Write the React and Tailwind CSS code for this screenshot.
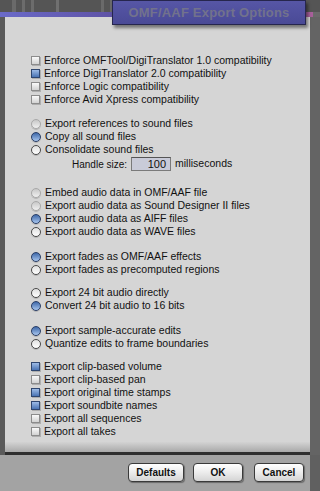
import React from "react";

const font = { fontFamily: '"Liberation Sans", Arial, sans-serif' };

function Check({ on }) {
  return (
    <span
      className={
        "inline-block w-[9px] h-[9px] shrink-0 border shadow-[1px_1px_0_rgba(0,0,0,0.18)] " +
        (on
          ? "border-[#2f4770] bg-gradient-to-b from-[#9dbbe6] to-[#4a74b4]"
          : "border-[#8c8c8c] bg-gradient-to-b from-[#fafafa] to-[#d2d2d2]")
      }
    />
  );
}

function Radio({ on, dis }) {
  let cls = "border-[#4a4a4a] bg-gradient-to-b from-[#e0e0e0] to-[#ffffff]";
  if (on) cls = "border-[#2a3e66] bg-gradient-to-b from-[#3f68a8] to-[#a8c6ee]";
  if (dis) cls = "border-[#a8a8a8] bg-gradient-to-b from-[#c8c8c8] to-[#f0f0f0]";
  return (
    <span
      className={
        "inline-block w-[10px] h-[10px] shrink-0 rounded-full border shadow-[0_1px_0_rgba(0,0,0,0.15)] " +
        cls
      }
    />
  );
}

function Row({ kind, on, dis, children }) {
  return (
    <div className="h-[13px] flex items-center gap-[4px]">
      {kind === "c" ? <Check on={on} /> : <Radio on={on} dis={dis} />}
      <span className="text-[10.5px] leading-none text-[#111] whitespace-nowrap">{children}</span>
    </div>
  );
}

function Btn({ w, children }) {
  return (
    <div
      className={
        "h-[19px] flex items-center justify-center rounded-[4px] border border-[#3a3a3a] bg-gradient-to-b from-[#ffffff] via-[#ececec] to-[#d4d4d4] shadow-[1px_1px_1px_rgba(0,0,0,0.35)] text-[10px] font-bold text-[#111] " +
        w
      }
    >
      {children}
    </div>
  );
}

export default function App() {
  return (
    <div className="w-[320px] h-[491px] relative overflow-hidden flex flex-col bg-[#5e5e5e]" style={font}>
      {/* top texture strip */}
      <div className="h-[12px] flex bg-[#555] gap-[6px] pl-[12px]">
        <div className="w-[4px] bg-[#6a6a6a]" />
        <div className="w-[3px] bg-[#6c6c6c]" />
        <div className="w-[3px] bg-[#6c6c6c]" />
        <div className="w-[10px]" />
        <div className="w-[3px] bg-[#707070]" />
        <div className="w-[30px]" />
        <div className="w-[3px] bg-[#6a6a6a]" />
        <div className="w-[3px] bg-[#6a6a6a]" />
        <div className="w-[3px] bg-[#6a6a6a]" />
      </div>
      {/* purple bar */}
      <div className="h-[5px] flex">
        <div className="w-[313px] bg-gradient-to-r from-[#6a6ac8] via-[#5a4a98] to-[#a8609a]" />
        <div className="flex-1 bg-[#6a6a6a]" />
      </div>

      {/* middle */}
      <div className="h-[438px] flex">
        <div className="w-[5px] bg-[#5a5a5a]" />
        <div className="flex-1 flex flex-col bg-[#d5d5d5]">
          <div className="flex-1 pt-[37px] pl-[26px]">
            <div>
              <Row kind="c">Enforce OMFTool/DigiTranslator 1.0 compatibility</Row>
              <Row kind="c" on>Enforce DigiTranslator 2.0 compatibility</Row>
              <Row kind="c">Enforce Logic compatibility</Row>
              <Row kind="c">Enforce Avid Xpress compatibility</Row>
            </div>
            <div className="mt-[11px]">
              <Row kind="r" dis>Export references to sound files</Row>
              <Row kind="r" on>Copy all sound files</Row>
              <Row kind="r">Consolidate sound files</Row>
              <div className="h-[16px] flex items-center ml-[41px] text-[10px] text-[#111]">
                <span>Handle size:</span>
                <span className="ml-[4px] w-[40px] h-[14px] border border-[#7a7a7a] border-t-[#555] bg-[#c9cbd8] flex items-center justify-end pr-[4px] text-[11px]">
                  100
                </span>
                <span className="ml-[4px] text-[10.5px]">milliseconds</span>
              </div>
            </div>
            <div className="mt-[14px]">
              <Row kind="r" dis>Embed audio data in OMF/AAF file</Row>
              <Row kind="r" dis>Export audio data as Sound Designer II files</Row>
              <Row kind="r" on>Export audio data as AIFF files</Row>
              <Row kind="r">Export audio data as WAVE files</Row>
            </div>
            <div className="mt-[12px]">
              <Row kind="r" on>Export fades as OMF/AAF effects</Row>
              <Row kind="r">Export fades as precomputed regions</Row>
            </div>
            <div className="mt-[10px]">
              <Row kind="r">Export 24 bit audio directly</Row>
              <Row kind="r" on>Convert 24 bit audio to 16 bits</Row>
            </div>
            <div className="mt-[12px]">
              <Row kind="r" on>Export sample-accurate edits</Row>
              <Row kind="r">Quantize edits to frame boundaries</Row>
            </div>
            <div className="mt-[10px]">
              <Row kind="c" on>Export clip-based volume</Row>
              <Row kind="c">Export clip-based pan</Row>
              <Row kind="c" on>Export original time stamps</Row>
              <Row kind="c" on>Export soundbite names</Row>
              <Row kind="c">Export all sequences</Row>
              <Row kind="c">Export all takes</Row>
            </div>
          </div>
          <div className="h-[10px] bg-gradient-to-b from-[#d3d3d3] to-[#a9a9a9]" />
          <div className="h-[3px] bg-[#2e2e2e]" />
        </div>
        <div className="w-[10px] bg-[#646464]" />
      </div>

      {/* bottom */}
      <div className="flex-1 flex">
        <div className="flex-1 bg-[#a3a3a3] flex justify-end items-start pt-[8px] pr-[6px]">
          <Btn w="w-[56px]">Defaults</Btn>
          <div className="w-[9px]" />
          <Btn w="w-[50px]">OK</Btn>
          <div className="w-[11px]" />
          <Btn w="w-[50px]">Cancel</Btn>
        </div>
        <div className="w-[10px] bg-[#606060]" />
      </div>

      {/* title tab */}
      <div className="absolute left-[112px] top-0 w-[194px] h-[25px] bg-gradient-to-b from-[#5656a6] to-[#4a4a96] border border-[#26264e] shadow-[2px_3px_3px_rgba(0,0,0,0.45)] flex items-center justify-center">
        <span className="text-[13px] font-bold text-[#72728c] tracking-[0.2px]">OMF/AAF Export Options</span>
      </div>
    </div>
  );
}
